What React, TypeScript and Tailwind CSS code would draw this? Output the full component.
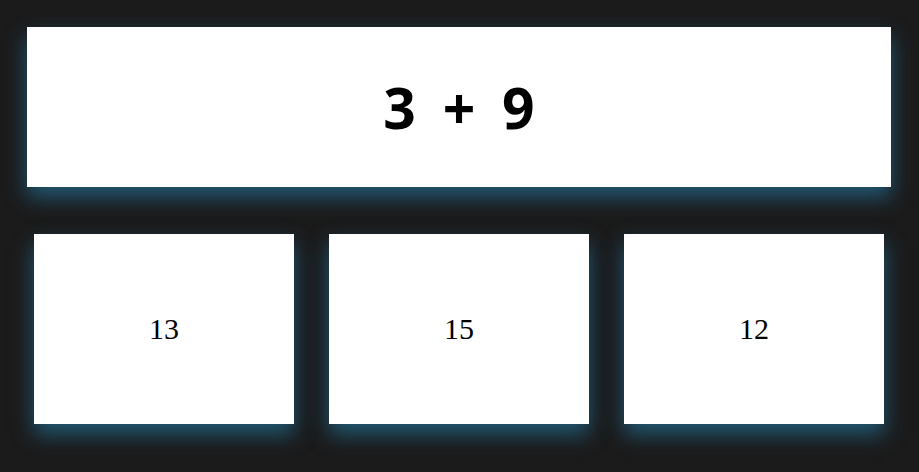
import React from "react";

export default function App() {
  const answers = ["13", "15", "12"];
  return (
    <div className="w-[919px] h-[472px] bg-[#1b1b1b] overflow-hidden">
      <div className="pt-[27px] pl-[27px] pr-[28px]">
        <div className="h-[160px] bg-white flex items-center justify-center shadow-[0_10px_20px_rgba(35,105,140,0.8)]">
          <span
            className="text-[57px] font-bold text-black leading-none [word-spacing:12px]"
            style={{ fontFamily: '"Open Sans", "Noto Sans", sans-serif' }}
          >
            3 + 9
          </span>
        </div>
      </div>
      <div className="flex gap-[35px] pl-[34px] pt-[47px]">
        {answers.map((a) => (
          <div
            key={a}
            className="w-[260px] h-[190px] bg-white flex items-center justify-center shadow-[0_10px_20px_rgba(35,105,140,0.8)]"
          >
            <span
              className="text-[30px] text-black leading-none"
              style={{ fontFamily: '"Liberation Serif", "Times New Roman", serif' }}
            >
              {a}
            </span>
          </div>
        ))}
      </div>
    </div>
  );
}
